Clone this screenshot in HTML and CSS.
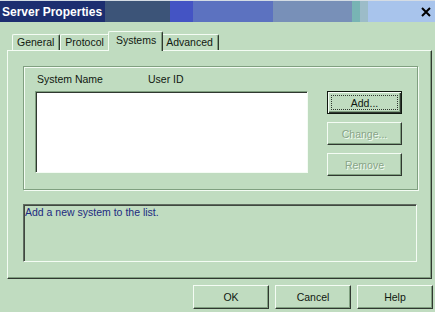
FILE: index.html
```html
<!DOCTYPE html>
<html lang="en">
<head>
  <meta charset="UTF-8">
  <title>Server Properties</title>
  <link rel="stylesheet" href="styles.css">
</head>
<body>
  <div class="titlebar">
    <span class="title">Server Properties</span>
    <svg class="close" width="10" height="10" viewBox="0 0 10 10">
      <path d="M1 1 L9 9 M9 1 L1 9" stroke="#000" stroke-width="2"/>
    </svg>
  </div>

  <div class="tabs">
    <div class="tab">General</div>
    <div class="tab">Protocol</div>
    <div class="tab active">Systems</div>
    <div class="tab">Advanced</div>
  </div>

  <div class="panel">
    <div class="group">
      <div class="list-col">
        <div class="headers">
          <span class="col-name">System Name</span>
          <span>User ID</span>
        </div>
        <div class="list"></div>
      </div>
      <div class="side-buttons">
        <div class="btn default"><span class="focus">Add...</span></div>
        <div class="btn disabled">Change...</div>
        <div class="btn disabled">Remove</div>
      </div>
    </div>

    <div class="desc">Add a new system to the list.</div>
  </div>

  <div class="footer">
    <div class="btn wide">OK</div>
    <div class="btn wide">Cancel</div>
    <div class="btn wide">Help</div>
  </div>
</body>
</html>
```

FILE: styles.css
```css
body {
  margin: 0;
  width: 435px;
  height: 312px;
  overflow: hidden;
  background-color: #c0dcc0;
  font-family: "Liberation Sans", Arial, sans-serif;
  font-size: 10.5px;
  color: #101810;
}

/* title bar */
.titlebar {
  height: 21px;
  border-top: 1px solid #d4dce4;
  display: flex;
  align-items: center;
  padding-left: 2px;
  background: linear-gradient(to right,
    #1c2e70 0 105px,
    #3c5478 105px 170px,
    #4454c4 170px 193px,
    #5c72c0 193px 273px,
    #7890b8 273px 352px,
    #78b4b4 352px 360px,
    #9cbcc8 360px 368px,
    #a8c4ec 368px);
}

.title {
  color: #fff;
  font-weight: bold;
  font-size: 12px;
}

.close {
  margin-left: auto;
  margin-right: 4px;
  margin-top: 1px;
}

/* tabs */
.tabs {
  display: flex;
  align-items: flex-end;
  height: 19px;
  margin-top: 9px;
  padding-left: 12px;
}

.tab {
  height: 15px;
  line-height: 15px;
  padding: 0 5px 0 4px;
  border-top: 1px solid #f4fcf4;
  border-left: 1px solid #f4fcf4;
  border-right: 1px solid #303830;
  box-shadow: inset -1px 0 0 #80a080;
  border-radius: 2px 2px 0 0;
}

.tab.active {
  position: relative;
  z-index: 1;
  height: 19px;
  line-height: 16px;
  margin: 0 -2px -1px;
  padding: 0 6px 0 7px;
  background-color: #c0dcc0;
}

/* tab page */
.panel {
  box-sizing: border-box;
  height: 229px;
  margin: 0 3px 0 7px;
  padding: 15px 0 0 15px;
  border-top: 1px solid #f4fcf4;
  border-left: 1px solid #f4fcf4;
  border-right: 1px solid #303830;
  border-bottom: 1px solid #303830;
  box-shadow: inset -1px -1px 0 #80a080;
}

.group {
  box-sizing: border-box;
  width: 395px;
  height: 124px;
  padding: 6px 15px 0 11px;
  display: flex;
  gap: 19px;
  border: 1px solid #80a080;
  box-shadow: inset 1px 1px 0 #f4fcf4, 1px 1px 0 #f4fcf4;
}

.headers {
  display: flex;
  height: 13px;
  line-height: 13px;
  margin-bottom: 5px;
  padding-left: 2px;
}

.col-name {
  width: 111px;
}

.list {
  box-sizing: border-box;
  width: 273px;
  height: 82px;
  background-color: #fff;
  border-top: 1px solid #80a080;
  border-left: 1px solid #80a080;
  border-right: 1px solid #f4fcf4;
  border-bottom: 1px solid #f4fcf4;
  box-shadow: inset 1px 1px 0 #303830;
}

.side-buttons {
  display: flex;
  flex-direction: column;
  gap: 8px;
  margin-top: 18px;
}

/* buttons */
.btn {
  box-sizing: border-box;
  width: 75px;
  height: 23px;
  display: flex;
  align-items: center;
  justify-content: center;
  border-top: 1px solid #f4fcf4;
  border-left: 1px solid #f4fcf4;
  border-right: 1px solid #303830;
  border-bottom: 1px solid #303830;
  box-shadow: inset -1px -1px 0 #80a080;
}

.btn.default {
  border: 1px solid #101810;
  padding: 3px;
  box-shadow: inset 1px 1px 0 #f4fcf4, inset -1px -1px 0 #303830, inset -2px -2px 0 #80a080;
}

.focus {
  flex: 1;
  align-self: stretch;
  display: flex;
  align-items: center;
  justify-content: center;
  border: 1px dotted #303830;
}

.btn.disabled {
  color: #88a488;
  text-shadow: 1px 1px 0 #f4fcf4;
}

/* description */
.desc {
  box-sizing: border-box;
  width: 394px;
  height: 58px;
  margin-top: 14px;
  padding: 1px 0 0 1px;
  color: #1c2a80;
  border-top: 1px solid #606c60;
  border-left: 1px solid #606c60;
  border-right: 1px solid #f4fcf4;
  border-bottom: 1px solid #f4fcf4;
  box-shadow: inset 1px 1px 0 #404840;
}

.footer {
  display: flex;
  justify-content: flex-end;
  gap: 6px;
  margin: 6px 2px 0 0;
}

.btn.wide {
  width: 76px;
  height: 24px;
}
```
